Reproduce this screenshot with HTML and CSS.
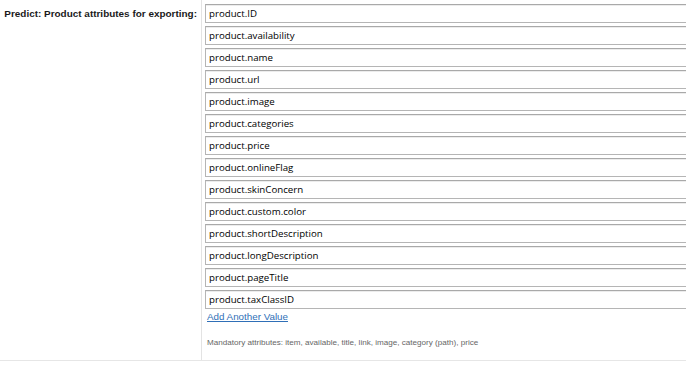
FILE: index.html
```html
<!DOCTYPE html>
<html>
<head>
<meta charset="utf-8">
<link rel="stylesheet" href="styles.css">
</head>
<body>
<div class="page">
  <div class="row">
    <div class="label-cell">
      <label class="label">Predict: Product attributes for exporting:</label>
    </div>
    <div class="value-cell">
      <div class="inputs">
        <input class="field" type="text" value="product.ID">
        <input class="field" type="text" value="product.availability">
        <input class="field" type="text" value="product.name">
        <input class="field" type="text" value="product.url">
        <input class="field" type="text" value="product.image">
        <input class="field" type="text" value="product.categories">
        <input class="field" type="text" value="product.price">
        <input class="field" type="text" value="product.onlineFlag">
        <input class="field" type="text" value="product.skinConcern">
        <input class="field" type="text" value="product.custom.color">
        <input class="field" type="text" value="product.shortDescription">
        <input class="field" type="text" value="product.longDescription">
        <input class="field" type="text" value="product.pageTitle">
        <input class="field" type="text" value="product.taxClassID">
      </div>
      <a class="add-link" href="#">Add Another Value</a>
      <p class="hint">Mandatory attributes: item, available, title, link, image, category (path), price</p>
    </div>
  </div>
</div>
</body>
</html>
```
FILE: styles.css
```css
html, body {
  margin: 0;
  padding: 0;
  background: #fff;
}

.page {
  width: 686px;
  overflow: hidden;
}

.row {
  display: flex;
  height: 360px;
  border-bottom: 1px solid #e6e6e6;
}

.label-cell {
  width: 197px;
  padding-right: 4px;
  border-right: 1px solid #e3e3e3;
  text-align: right;
  padding-top: 3px;
  box-sizing: content-box;
}

.label {
  font-family: "Liberation Sans", Arial, sans-serif;
  font-weight: bold;
  font-size: 9.95px;
  color: #1a1a1a;
  white-space: nowrap;
}

.value-cell {
  flex: 1;
  padding: 4px 0 0 3px;
  display: flex;
  flex-direction: column;
  min-width: 0;
}

.inputs {
  display: flex;
  flex-direction: column;
  gap: 3px;
}

.field {
  box-sizing: border-box;
  width: 520px;
  height: 19px;
  margin: 0;
  padding: 0 0 0 3px;
  border: 1px solid #b5b5b5;
  border-top-color: #a9a9a9;
  box-shadow: inset 0 1px 0 #ececec;
  font-family: "Open Sans", "Liberation Sans", sans-serif;
  font-size: 9.7px;
  color: #000;
  background: #fff;
  outline: none;
}

.add-link {
  margin-top: 2px;
  align-self: flex-start;
  margin-left: 2px;
  font-family: "Liberation Sans", Arial, sans-serif;
  font-size: 9.8px;
  color: #2f6fb7;
  text-decoration: underline;
  line-height: 12px;
}

.hint {
  margin: 15px 0 0 2px;
  font-family: "Liberation Sans", Arial, sans-serif;
  font-size: 8.1px;
  color: #666;
  line-height: 10px;
}
```
